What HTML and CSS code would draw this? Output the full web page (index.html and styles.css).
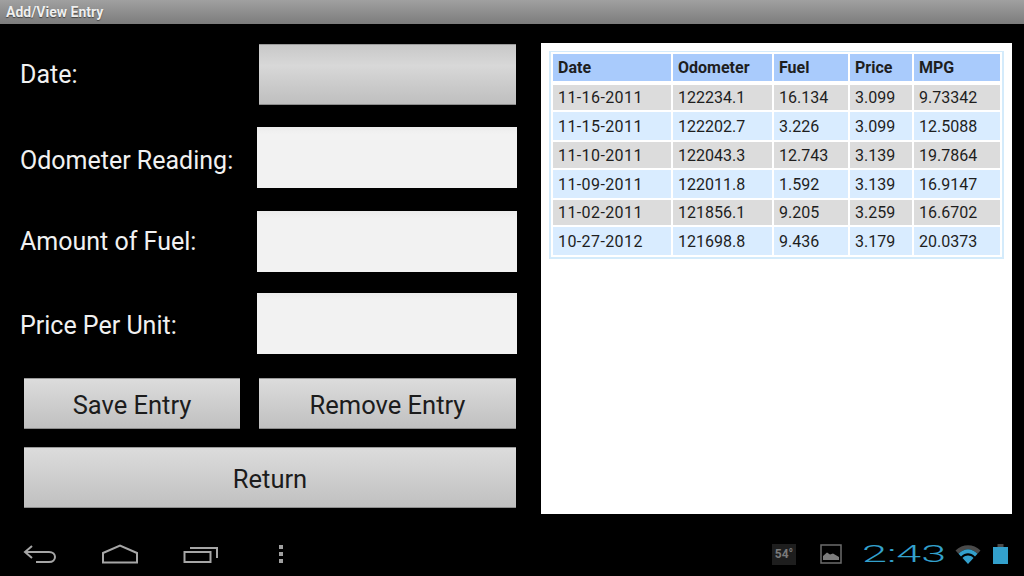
FILE: index.html
```html
<!DOCTYPE html>
<html lang="en">

<head>
  <meta charset="UTF-8">
  <meta name="viewport" content="width=device-width, initial-scale=1.0">
  <title>Add/View Entry</title>
  <link rel="stylesheet" href="styles.css">
</head>

<body>
  <div class="title-bar">Add/View Entry</div>

  <div class="content">
    <!-- form on the left -->
    <div class="form">
      <div class="form-row date-row">
        <span class="label">Date:</span>
        <div class="btn date-btn"></div>
      </div>
      <div class="form-row odo-row">
        <span class="label">Odometer Reading:</span>
        <div class="field"></div>
      </div>
      <div class="form-row fuel-row">
        <span class="label">Amount of Fuel:</span>
        <div class="field"></div>
      </div>
      <div class="form-row price-row">
        <span class="label">Price Per Unit:</span>
        <div class="field"></div>
      </div>
      <div class="btn-row">
        <div class="btn save-btn">Save Entry</div>
        <div class="btn remove-btn">Remove Entry</div>
      </div>
      <div class="btn return-btn">Return</div>
    </div>

    <!-- entries on the right -->
    <div class="panel">
      <div class="table-wrap">
        <table class="entries">
          <tr class="head">
            <th class="col-date">Date</th>
            <th class="col-odo">Odometer</th>
            <th class="col-fuel">Fuel</th>
            <th class="col-price">Price</th>
            <th class="col-mpg">MPG</th>
          </tr>
          <tr class="odd h25"><td>11-16-2011</td><td>122234.1</td><td>16.134</td><td>3.099</td><td>9.73342</td></tr>
          <tr class="even h28"><td>11-15-2011</td><td>122202.7</td><td>3.226</td><td>3.099</td><td>12.5088</td></tr>
          <tr class="odd h26"><td>11-10-2011</td><td>122043.3</td><td>12.743</td><td>3.139</td><td>19.7864</td></tr>
          <tr class="even h28"><td>11-09-2011</td><td>122011.8</td><td>1.592</td><td>3.139</td><td>16.9147</td></tr>
          <tr class="odd h25"><td>11-02-2011</td><td>121856.1</td><td>9.205</td><td>3.259</td><td>16.6702</td></tr>
          <tr class="even h28"><td>10-27-2012</td><td>121698.8</td><td>9.436</td><td>3.179</td><td>20.0373</td></tr>
        </table>
      </div>
    </div>
  </div>

  <div class="nav-bar">
    <div class="nav-left">
      <svg class="ic-back" width="34" height="20" viewBox="0 0 34 20" fill="none" stroke="#a6a6a6" stroke-width="2">
        <path d="M9 2 L2 8 L9 14" />
        <path d="M2 8 H26 C30 8 32 10.500 32 13 C32 15.500 30 18 26 18 H13" />
      </svg>
      <svg class="ic-home" width="38" height="20" viewBox="0 0 38 20" fill="none" stroke="#a6a6a6" stroke-width="2">
        <path d="M2 9 L19 1.500 L36 9 V18.500 H2 Z" />
      </svg>
      <svg class="ic-recent" width="36" height="18" viewBox="0 0 36 18" fill="none" stroke="#a6a6a6" stroke-width="2">
        <rect x="1.500" y="7" width="26" height="10" />
        <path d="M7 3 H34 V13" />
      </svg>
      <div class="ic-menu"><i></i><i></i><i></i></div>
    </div>

    <div class="nav-right">
      <div class="temp">54°</div>
      <svg class="ic-image" width="22" height="20" viewBox="0 0 22 20">
        <rect x="1" y="1" width="20" height="18" fill="none" stroke="#6c6c6c" stroke-width="1.500" />
        <path d="M3 16 V12 L7 8.500 L10 10.500 L13 9.500 L19 13 V16 Z" fill="#7c7c7c" />
      </svg>
      <div class="time-box"><span class="time">2:43</span></div>
      <svg class="ic-wifi" width="26" height="20" viewBox="0 0 26 20">
        <path d="M0.500 6.500 C7.500 -0.500 18.500 -0.500 25.500 6.500 L22.500 9.800 C16.500 3.800 9.500 3.800 3.500 9.800 Z" fill="#4a4a4a" />
        <path d="M3.500 9.800 C9.500 3.800 16.500 3.800 22.500 9.800 L20 12.600 C15.500 8.200 10.500 8.200 6 12.600 Z" fill="#33a0cc" />
        <path d="M7.500 14 C11 10.800 15 10.800 18.500 14 L13 20 Z" fill="#33a0cc" />
      </svg>
      <svg class="ic-battery" width="15" height="20" viewBox="0 0 15 20">
        <rect x="4.500" y="0" width="6" height="3" fill="#4a4a4a" />
        <rect x="0" y="3" width="15" height="17" fill="#33a0cc" />
      </svg>
    </div>
  </div>
</body>

</html>
```

FILE: styles.css
```css
* {
  margin: 0;
  padding: 0;
  box-sizing: border-box;
}

body {
  width: 1024px;
  height: 576px;
  overflow: hidden;
  background-color: #000;
  font-family: Roboto, "Liberation Sans", sans-serif;
}

.title-bar {
  height: 24px;
  padding-left: 6px;
  line-height: 24px;
  font-size: 14px;
  font-weight: 700;
  color: #efefef;
  text-shadow: 0 1px 1px #444;
  background: linear-gradient(#a0a0a0, #7c7c7c);
}

.content {
  display: flex;
  height: 496px;
}

/* left form */
.form {
  width: 541px;
  padding: 20px 0 0 20px;
}

.form-row {
  display: flex;
  align-items: center;
  justify-content: space-between;
  width: 497px;
  height: 61px;
}

.date-row {
  width: 496px;
  margin-bottom: 22px;
}

.odo-row {
  margin-bottom: 23px;
}

.fuel-row {
  margin-bottom: 21px;
}

.price-row {
  margin-bottom: 24px;
}

.label {
  font-size: 25px;
  color: #f1f1f1;
}

.odo-row .label {
  margin-top: 6px;
}

.price-row .label {
  margin-top: 4px;
}

.field {
  width: 260px;
  height: 61px;
  background: linear-gradient(#ececec, #f2f2f2 12%);
}

.btn {
  display: flex;
  align-items: center;
  justify-content: center;
  padding-top: 2px;
  font-size: 25.500px;
  color: #1c1c1c;
  background: linear-gradient(#dcdcdc, #c0c0c0);
  border-top: 1px solid #9a9a9a;
  border-bottom: 1px solid #8c8c8c;
}

.date-btn {
  width: 257px;
  height: 61px;
  background: linear-gradient(#c8c8c8, #d8d8d8 35%, #cacaca 70%, #bfbfbf);
}

.btn-row {
  display: flex;
  justify-content: space-between;
  width: 492px;
  height: 51px;
  margin: 0 0 18px 4px;
}

.save-btn {
  width: 216px;
}

.remove-btn {
  width: 257px;
}

.return-btn {
  width: 492px;
  height: 61px;
  margin-left: 4px;
}

/* right panel */
.panel {
  width: 471px;
  height: 471px;
  margin-top: 19px;
  padding: 8px;
  background-color: #fff;
}

.table-wrap {
  width: 455px;
  height: 208px;
  padding: 1px 2px 2px;
  background-color: #d4ebfb;
}

.entries {
  table-layout: fixed;
  border-collapse: separate;
  border-spacing: 2px;
  background-color: #fff;
  font-size: 16px;
  color: #1e1e1e;
}

.entries th,
.entries td {
  padding-left: 5px;
  text-align: left;
}

.entries td:first-child {
  letter-spacing: .4px;
}

.entries th {
  font-weight: 700;
  background-color: #a9cbfc;
  border-bottom: 2px solid #fff;
}

.head {
  height: 29px;
}

.col-date {
  width: 118px;
}

.col-odo {
  width: 99px;
}

.col-fuel {
  width: 74px;
}

.col-price {
  width: 62px;
}

.col-mpg {
  width: 86px;
}

.h25 {
  height: 25px;
}

.h26 {
  height: 26px;
}

.h28 {
  height: 28px;
}

.odd td {
  background-color: #dcdcdc;
}

.even td {
  background-color: #d9ecff;
}

/* system bar */
.nav-bar {
  display: flex;
  align-items: center;
  justify-content: space-between;
  height: 56px;
  padding: 12px 16px 0 23px;
}

.nav-left,
.nav-right {
  display: flex;
  align-items: center;
}

.ic-back {
  margin-right: 44px;
}

.ic-home {
  margin-right: 44px;
}

.ic-recent {
  margin-right: 60px;
}

.ic-menu {
  display: flex;
  flex-direction: column;
  gap: 3px;
}

.ic-menu i {
  display: block;
  width: 4px;
  height: 4px;
  background-color: #a0a0a0;
}

.temp {
  width: 24px;
  height: 21px;
  margin-right: 24px;
  line-height: 21px;
  font-size: 12px;
  font-weight: 700;
  text-align: center;
  color: #7a7a7a;
  background-color: #1e1e1e;
}

.ic-image {
  margin-right: 20px;
}

.time-box {
  width: 80px;
  margin-right: 13px;
}

.time {
  display: block;
  font-size: 24px;
  font-weight: 300;
  line-height: 24px;
  color: #33a0cc;
  transform: scaleX(1.87);
  transform-origin: left center;
}

.ic-wifi {
  margin-right: 12px;
}
```
